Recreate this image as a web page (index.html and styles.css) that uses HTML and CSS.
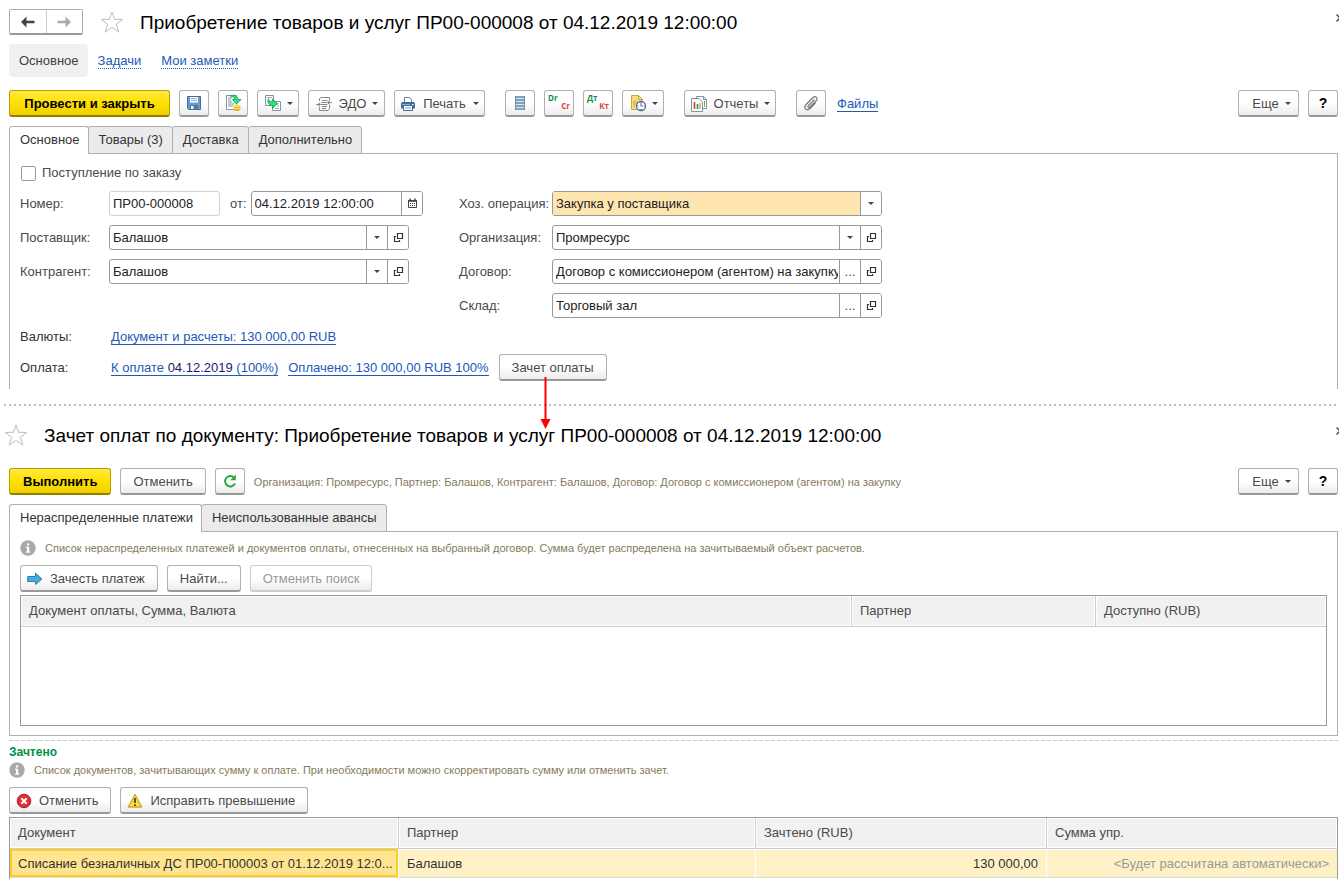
FILE: index.html
```html
<!DOCTYPE html>
<html lang="ru">
<head>
<meta charset="utf-8">
<title>Приобретение товаров и услуг</title>
<link rel="stylesheet" href="styles.css">
</head>
<body>
<svg class="sprite" width="0" height="0" aria-hidden="true">
  <defs>
    <symbol id="star" viewBox="0 0 24 22"><path d="M12 1 14.600 8.300 22.800 8.400 16.300 13.300 18.800 21.200 12 16.500 5.200 21.200 7.700 13.300 1.200 8.400 9.400 8.300Z" fill="#fff" stroke="#b9bec4" stroke-width="1"/></symbol>
    <symbol id="open" viewBox="0 0 11 11"><path d="M4.500 1.500H9.500V6.500H4.500ZM3 4.500H1.500V9.500H6.500V8" fill="none" stroke="#333" stroke-width="1.200"/></symbol>
    <symbol id="close" viewBox="0 0 8 8"><path d="M0.500 0.500 7.500 7.500M7.500 0.500 0.500 7.500" stroke="#444" stroke-width="1.300"/></symbol>
    <symbol id="info" viewBox="0 0 16 16"><circle cx="8" cy="8" r="7.700" fill="#a9a9a9"/><path d="M7 3.500H9.200V5.500H7ZM6 6.700H9.200V11.500H10.200V12.700H6V11.500H7V7.900H6Z" fill="#fff"/></symbol>
  </defs>
</svg>

<main class="page">
  <section class="document">
    <header class="head">
      <div class="history">
        <button class="history-btn" type="button" aria-label="Назад"><svg width="16" height="12" viewBox="0 0 16 12"><path d="M1 6 6.500 0.500V4.800H14.500V7.200H6.500V11.500Z" fill="#444"/></svg></button>
        <button class="history-btn" type="button" aria-label="Вперед"><svg width="16" height="12" viewBox="0 0 16 12"><path d="M15 6 9.500 0.500V4.800H1.500V7.200H9.500V11.500Z" fill="#aaa"/></svg></button>
      </div>
      <button class="plain star-btn" type="button" aria-label="В избранное"><svg width="24" height="22"><use href="#star"/></svg></button>
      <h1 class="title">Приобретение товаров и услуг ПР00-000008 от 04.12.2019 12:00:00</h1>
      <button class="plain close-btn" type="button" aria-label="Закрыть"><svg width="8" height="8"><use href="#close"/></svg></button>
    </header>

    <nav class="sections">
      <a class="section current" href="#">Основное</a>
      <a class="section" href="#"><span>Задачи</span></a>
      <a class="section" href="#"><span>Мои заметки</span></a>
    </nav>

    <div class="toolbar">
      <div class="group">
        <button class="btn primary post" type="button">Провести и закрыть</button>
        <button class="btn icon" type="button" aria-label="Записать"><svg width="16" height="16" viewBox="0 0 16 16"><path d="M1.500 1.500H14.500V14.500H2.700L1.500 13.300Z" fill="#6d9bd1" stroke="#3f6ba3"/><path d="M4 2H12V7.500H4Z" fill="#fff"/><path d="M5 3.500H11M5 5.500H11" stroke="#8fb0dc"/><path d="M4 10H12V14.500H4Z" fill="#54779f"/><path d="M5 11H7.500V14H5Z" fill="#fff"/></svg></button>
        <button class="btn icon" type="button" aria-label="Провести"><svg width="18" height="18" viewBox="0 0 18 18"><path d="M2.500 1.500H12.500V15.500H2.500Z" fill="#fff" stroke="#8395a5"/><path d="M4 4H8M4 6H7M4 8H8M4 10H10M4 12H9" stroke="#8395a5"/><path d="M6 2C10 0 14 2 14 5.500H17L12.500 10 8.500 5.500H11C11 3.500 9 2.500 6 2Z" fill="#2fe07c" stroke="#14a052" stroke-width=".8"/><ellipse cx="13" cy="15.200" rx="3.500" ry="1.800" fill="#e6b22f"/><ellipse cx="13" cy="12.800" rx="3.500" ry="1.800" fill="#d79a1b"/><ellipse cx="13" cy="12" rx="3.500" ry="1.500" fill="#ffdc62"/><path d="M9.500 14.600H16.500" stroke="#ffe27b"/></svg></button>
        <button class="btn menu-icon" type="button" aria-label="Создать на основании"><svg width="18" height="18" viewBox="0 0 18 18"><path d="M1.500 1.500H9.500V11.500H1.500ZM8.500 7.500H16.500V16.500H8.500Z" fill="#fff" stroke="#8395a5"/><path d="M3 3.500H8M13 10H15M13 12H15M11 14.500H15" stroke="#9aabb8"/><path d="M4.500 4.500C4.500 7 6 7.500 8.500 7.500V5L13.500 9.500 8.500 14.500V11.500C4.500 11.500 3 8.500 4.500 4.500Z" fill="#2fe07c" stroke="#14a052" stroke-width=".8"/></svg><i class="caret"></i></button>
        <button class="btn edo" type="button"><svg width="18" height="18" viewBox="0 0 18 18"><path d="M4.500 6V3.500L6 2.500H14.500V5M14.500 10V13.500L13 15.500H4.500V12M7 5.500H12.500M6 7.500H12.500M6 9.500H12.500M7 11.500H12M7 13.500H11" fill="none" stroke="#888"/><path d="M1 9.500H5M12.500 7.500H17" stroke="#888" stroke-width="1.200"/><path d="M3.500 7 6 9.500 3.500 12ZM14.500 5 12 7.500 14.500 10Z" fill="#888"/></svg><span>ЭДО</span><i class="caret"></i></button>
        <button class="btn print" type="button"><svg width="16" height="16" viewBox="0 0 16 16"><path d="M4.500 6V1.500H9.500L11.500 3.500V6" fill="#fff" stroke="#66829c"/><path d="M2 6H14L15 7.500V12.500H1V7.500Z" fill="#3e6c99"/><path d="M2 8.500H10" stroke="#88afd2"/><path d="M3.500 9.500H12.500V14.500H3.500Z" fill="#fff" stroke="#3e6c99"/><path d="M5 12H11" stroke="#7792aa"/><path d="M12 8.500H13.500" stroke="#fff"/></svg><span>Печать</span><i class="caret"></i></button>
      </div>
      <div class="group">
        <button class="btn icon" type="button" aria-label="Структура"><svg width="12" height="16" viewBox="0 0 12 16"><path d="M1 1H11V15H1Z" fill="#d4e4f0"/><path d="M1.500 1V15M10.500 1V15" stroke="#7297b5"/><path d="M1 2H11M1 5H11M1 8H11M1 11H11M1 14H11" stroke="#638cae" stroke-width="1.400"/></svg></button>
        <button class="btn icon entries" type="button"><span class="debit">Dr</span><span class="credit">Cr</span></button>
        <button class="btn icon entries" type="button"><span class="debit">Дт</span><span class="credit">Кт</span></button>
        <button class="btn menu-icon" type="button" aria-label="История"><svg width="18" height="18" viewBox="0 0 18 18"><path d="M2.500 1.500H9.500L13.500 5.500V15.500H2.500Z" fill="#f6dc81" stroke="#c9a646"/><path d="M9.500 1.500V5.500H13.500M4 8H8M4 10H7M4 12H6" fill="none" stroke="#c9a646"/><circle cx="12" cy="12" r="4.500" fill="#fff" stroke="#3d73ad" stroke-width="1.300"/><path d="M12 12V9M12 12H14" stroke="#3d73ad"/><path d="M11.400 8.200H12.600M11.400 15.500H12.600M8.500 12H9.500M14.700 12H15.700" stroke="#e22d2d" stroke-width="1.200"/></svg><i class="caret"></i></button>
      </div>
      <div class="group">
        <button class="btn reports" type="button"><svg width="18" height="18" viewBox="0 0 18 18"><path d="M6.500 1.500H13.500L16.500 4.500V13.500H6.500Z" fill="#fff" stroke="#7d92a3"/><path d="M1.500 3.500H9L12.500 7V16.500H1.500Z" fill="#fff" stroke="#7d92a3"/><path d="M13.500 1.500V4.500H16.500" fill="none" stroke="#7d92a3"/><path d="M4.500 7V14" stroke="#e33131" stroke-width="1.600"/><path d="M7.500 9V14" stroke="#159a53" stroke-width="1.600"/><path d="M10 8V14" stroke="#d5a72d" stroke-width="1.400"/><path d="M14.500 6V12" stroke="#70aa37"/></svg><span>Отчеты</span><i class="caret"></i></button>
      </div>
      <div class="group files">
        <button class="btn icon" type="button" aria-label="Присоединенные файлы"><svg width="16" height="16" viewBox="0 0 16 16"><path d="M11.500 4.500 5.500 10.500C4 12 5.800 13.300 7 12L13 6C15.800 3.200 12.500.2 9.800 2.800L3.500 9C-.5 13 3.800 16.500 7 13.500L12.500 8" fill="none" stroke="#777" stroke-width="1.200"/></svg></button>
        <a class="link" href="#">Файлы</a>
      </div>
      <div class="group right">
        <button class="btn more" type="button"><span>Еще</span><i class="caret"></i></button>
        <button class="btn icon help" type="button">?</button>
      </div>
    </div>

    <div class="tabs" role="tablist">
      <button class="tab active" type="button" role="tab" aria-selected="true">Основное</button>
      <button class="tab" type="button" role="tab">Товары (3)</button>
      <button class="tab" type="button" role="tab">Доставка</button>
      <button class="tab" type="button" role="tab">Дополнительно</button>
    </div>

    <form class="panel form-panel">
      <label class="check"><input type="checkbox">Поступление по заказу</label>
      <div class="columns">
        <div class="fields fields-left">
          <label for="num">Номер:</label>
          <div class="number-row">
            <div class="field number"><input id="num" value="ПР00-000008" readonly></div>
            <label for="date">от:</label>
            <div class="field date"><input id="date" value="04.12.2019 12:00:00"><button type="button" aria-label="Календарь"><svg width="11" height="11" viewBox="0 0 11 11"><path d="M1.500 2.500H9.500V9.500H1.500Z" fill="#fff" stroke="#444"/><path d="M1 3H10M3 .5V3M8 .5V3" stroke="#444" stroke-width="1.500"/><path d="M3 5.500H8M3 7.500H8" stroke="#444" stroke-dasharray="1 1"/></svg></button></div>
          </div>
          <label for="supplier">Поставщик:</label>
          <div class="field"><input id="supplier" value="Балашов"><button type="button" aria-label="Выбрать"><i class="caret"></i></button><button type="button" aria-label="Открыть"><svg width="11" height="11"><use href="#open"/></svg></button></div>
          <label for="party">Контрагент:</label>
          <div class="field"><input id="party" value="Балашов"><button type="button" aria-label="Выбрать"><i class="caret"></i></button><button type="button" aria-label="Открыть"><svg width="11" height="11"><use href="#open"/></svg></button></div>
        </div>
        <div class="fields fields-right">
          <label for="operation">Хоз. операция:</label>
          <div class="field accent"><select id="operation"><option>Закупка у поставщика</option></select><span class="drop"><i class="caret"></i></span></div>
          <label for="org">Организация:</label>
          <div class="field"><input id="org" value="Промресурс"><button type="button" aria-label="Выбрать"><i class="caret"></i></button><button type="button" aria-label="Открыть"><svg width="11" height="11"><use href="#open"/></svg></button></div>
          <label for="contract">Договор:</label>
          <div class="field"><input id="contract" value="Договор с комиссионером (агентом) на закупку"><button type="button">...</button><button type="button" aria-label="Открыть"><svg width="11" height="11"><use href="#open"/></svg></button></div>
          <label for="store">Склад:</label>
          <div class="field"><input id="store" value="Торговый зал"><button type="button">...</button><button type="button" aria-label="Открыть"><svg width="11" height="11"><use href="#open"/></svg></button></div>
        </div>
      </div>
      <div class="summary">
        <span class="caption">Валюты:</span>
        <a class="link" href="#">Документ и расчеты: 130 000,00 RUB</a>
      </div>
      <div class="summary payment">
        <span class="caption">Оплата:</span>
        <a class="link" href="#">К оплате <b>04.12.2019</b> (100%)</a>
        <a class="link" href="#">Оплачено: 130 000,00 RUB 100%</a>
        <span class="offset">
          <button class="btn" type="button">Зачет оплаты</button>
          <svg class="arrow" width="11" height="52" viewBox="0 0 11 52" aria-hidden="true"><path d="M5.500 0V44" stroke="#f00" stroke-width="2"/><path d="M.5 42H10.500L5.500 52Z" fill="#f00"/></svg>
        </span>
      </div>
    </form>
  </section>

  <div class="divider"></div>

  <section class="offsets">
    <header class="head head-second">
      <button class="plain star-btn" type="button" aria-label="В избранное"><svg width="24" height="22"><use href="#star"/></svg></button>
      <h2 class="title">Зачет оплат по документу: Приобретение товаров и услуг ПР00-000008 от 04.12.2019 12:00:00</h2>
      <button class="plain close-btn" type="button" aria-label="Закрыть"><svg width="8" height="8"><use href="#close"/></svg></button>
    </header>

    <div class="toolbar">
      <div class="group">
        <button class="btn primary" type="button">Выполнить</button>
        <button class="btn" type="button">Отменить</button>
        <button class="btn icon" type="button" aria-label="Обновить"><svg width="16" height="16" viewBox="0 0 16 16"><path d="M12 4.500A5.200 5.200 0 1 0 13 10.500" fill="none" stroke="#2ca83c" stroke-width="2"/><path d="M13.800 1.500V7.200H8.200Z" fill="#2ca83c"/></svg></button>
        <span class="hint">Организация: Промресурс, Партнер: Балашов, Контрагент: Балашов, Договор: Договор с комиссионером (агентом) на закупку</span>
      </div>
      <div class="group right">
        <button class="btn more" type="button"><span>Еще</span><i class="caret"></i></button>
        <button class="btn icon help" type="button">?</button>
      </div>
    </div>

    <div class="tabs" role="tablist">
      <button class="tab active" type="button" role="tab" aria-selected="true">Нераспределенные платежи</button>
      <button class="tab" type="button" role="tab">Неиспользованные авансы</button>
    </div>

    <div class="panel payments-panel">
      <p class="note"><svg width="16" height="16"><use href="#info"/></svg><span class="hint">Список нераспределенных платежей и документов оплаты, отнесенных на выбранный договор. Сумма будет распределена на зачитываемый объект расчетов.</span></p>
      <div class="group actions">
        <button class="btn with-icon" type="button"><svg width="16" height="14" viewBox="0 0 16 14"><path d="M.7 4.500H8.500V1.200L15 7 8.500 12.500V9.500H.7Z" fill="#41abe6" stroke="#3a7ba8"/></svg><span>Зачесть платеж</span></button>
        <button class="btn" type="button">Найти...</button>
        <button class="btn" type="button" disabled>Отменить поиск</button>
      </div>
      <div class="table-box payments-box">
        <table>
          <colgroup><col><col class="col-partner"><col class="col-available"></colgroup>
          <thead><tr><th>Документ оплаты, Сумма, Валюта</th><th>Партнер</th><th>Доступно (RUB)</th></tr></thead>
        </table>
      </div>
    </div>

    <div class="dashes"></div>
    <h3 class="subtitle">Зачтено</h3>
    <p class="note"><svg width="16" height="16"><use href="#info"/></svg><span class="hint">Список документов, зачитывающих сумму к оплате. При необходимости можно скорректировать сумму или отменить зачет.</span></p>
    <div class="group actions">
      <button class="btn with-icon" type="button"><svg width="16" height="16" viewBox="0 0 16 16"><circle cx="8" cy="8" r="6.800" fill="#df2d34" stroke="#ad1d24"/><path d="M5.300 5.300 10.700 10.700M10.700 5.300 5.300 10.700" stroke="#fff" stroke-width="2"/></svg><span>Отменить</span></button>
      <button class="btn with-icon" type="button"><svg width="16" height="16" viewBox="0 0 16 16"><path d="M8 1.500 14.700 14H1.300Z" fill="#fcdd3d" stroke="#d1ab24" stroke-linejoin="round" stroke-width="1.400"/><path d="M8 5V10M8 11.200V13" stroke="#444" stroke-width="1.800"/></svg><span>Исправить превышение</span></button>
    </div>
    <div class="table-box done-box">
      <table>
        <colgroup><col class="col-doc"><col class="col-party"><col class="col-sum"><col></colgroup>
        <thead><tr><th>Документ</th><th>Партнер</th><th>Зачтено (RUB)</th><th>Сумма упр.</th></tr></thead>
        <tbody><tr><td class="selected">Списание безналичных ДС ПР00-П00003 от 01.12.2019 12:0...</td><td>Балашов</td><td class="num">130 000,00</td><td class="num auto">&lt;Будет рассчитана автоматически&gt;</td></tr></tbody>
      </table>
    </div>
  </section>
</main>
</body>
</html>
```
FILE: styles.css
```css
* { box-sizing: border-box; }
html { height: 100%; overflow: hidden; }
body { margin: 0; height: 100%; overflow: hidden; background: #fff; color: #4a4a4a; font: 13px/16px "Liberation Sans", Arial, sans-serif; }
button, input, select { font: inherit; color: inherit; }
svg { display: block; flex: none; }
.sprite { position: absolute; }
.page { padding: 8px 1px 0 9px; }

/* Window heading */
.head { display: flex; align-items: center; height: 28px; margin-right: -1px; }
.history { display: flex; width: 74px; height: 26px; border: 1px solid #aaa; border-bottom: 2px solid #999; border-radius: 2px; }
.history-btn { flex: 1; display: flex; align-items: center; justify-content: center; padding: 0; border: 0; background: #fff; }
.history-btn + .history-btn { border-left: 1px solid #ccc; }
.plain { padding: 0; border: 0; background: none; }
.star-btn { margin: 0 16px 0 17px; }
.title { flex: 1; margin: 0; padding-top: 2px; color: #000; font-size: 19px; line-height: 24px; font-weight: normal; white-space: nowrap; }
.close-btn { display: flex; justify-content: flex-start; width: 3px; overflow: hidden; margin-bottom: 8px; }
.head-second .star-btn { margin: 0 16px 0 -5px; }

/* Section links */
.sections { display: flex; align-items: center; gap: 20px; margin-top: 8px; height: 33px; color: #2159b8; }
.section { padding-top: 1px; color: #2159b8; text-decoration: none; }
.section span { border-bottom: 1px dotted #2159b8; }
.current { margin-right: -10px; padding: 9px 9px 8px 10px; border-radius: 4px; background: #f0f0f0; color: #404040; }

/* Command bars */
.toolbar { display: flex; gap: 20px; margin-top: 13px; }
.group { display: flex; align-items: center; gap: 9px; }
.right { margin-left: auto; }
.btn { display: flex; align-items: center; justify-content: center; height: 27px; padding: 1px 12px 0; border: 1px solid #b0b0b0; border-bottom: 2px solid #999; border-radius: 3px; background: linear-gradient(#fff 50%, #ececec); white-space: nowrap; }
.btn:disabled { border-color: #ccc; color: #999; }
.primary { padding: 1px 13px 0; border-color: #b5a000; border-bottom-color: #8f7e00; background: linear-gradient(#ffea40, #ffe000 50%, #f0d000); color: #000; font-weight: bold; }
.post { width: 161px; }
.icon { width: 30px; padding: 0; }
.menu-icon { width: 42px; padding: 0; gap: 5px; }
.edo { width: 77px; padding: 1px 6px 0; gap: 6px; }
.print { width: 91px; padding: 1px 6px 0; gap: 7px; }
.reports { width: 92px; padding: 1px 6px 0; gap: 6px; }
.more { width: 61px; padding: 1px 6px 0 12px; gap: 6px; }
.help { color: #000; font-size: 14px; font-weight: bold; }
.with-icon { padding-left: 6px; gap: 7px; }
.caret { width: 0; height: 0; border: 3px solid transparent; border-top-color: #444; border-bottom: 0; }
.entries { flex-direction: column; padding: 0 3px 2px; font: bold 8px/8px "Open Sans", sans-serif; }
.debit { align-self: flex-start; color: #0a9150; }
.credit { align-self: flex-end; color: #e34545; }
.link { color: #2159b8; text-decoration: none; border-bottom: 1px solid #2159b8; line-height: 15px; white-space: nowrap; }
.link b { color: #1a1a70; font-weight: normal; }
.files { gap: 11px; }

/* Tabs */
.tabs { display: flex; margin-top: 9px; position: relative; }
.tab { height: 28px; padding: 0 9px 0 10px; margin-left: -1px; border: 1px solid #b0b0b0; border-radius: 3px 3px 0 0; background: #ebebeb; color: #333; }
.tab.active { margin-left: 0; padding-right: 8px; border-bottom-color: #fff; background: #fff; }
.panel { margin-top: -1px; border: 1px solid #b0b0b0; padding: 0 10px; }

/* Document form */
.form-panel { border-bottom: 0; padding-bottom: 8px; }
.check { display: flex; align-items: center; gap: 6px; padding-top: 11px; }
.check input { appearance: none; width: 15px; height: 15px; margin: 0 0 0 1px; border: 1px solid #999; border-radius: 2px; background: #fff; }
.columns { display: flex; gap: 50px; margin-top: 10px; }
.fields { display: grid; align-items: center; align-content: start; gap: 9px 0; }
.fields-left { grid-template-columns: 89px 300px; }
.fields-right { grid-template-columns: 93px 330px; }
.number-row { display: flex; align-items: center; gap: 10px; margin-right: -14px; }
.number-row label { margin-right: -6px; }
.field { display: flex; min-width: 0; height: 25px; border: 1px solid #999; border-radius: 3px; background: #fff; overflow: hidden; }
.field input, .field select { flex: 1; min-width: 0; width: 0; padding: 0 3px; border: 0; outline: 0; background: none; color: #222; appearance: none; }
.field button, .drop { display: flex; align-items: center; justify-content: center; width: 21px; padding: 0; border: 0; border-left: 1px solid #999; background: #fff; }
.field input:not(:only-child) { padding-right: 1px; }
.number { width: 111px; border-color: #d0d0d0; }
.date { flex: 1; }
.accent select { background: #ffe5b0; }
.summary { display: flex; align-items: center; gap: 10px; margin-top: 10px; height: 17px; }
.summary .caption { width: 81px; color: #333; }
.payment { margin-top: 9px; height: 27px; }
.offset { position: relative; }
.arrow { position: absolute; left: 41px; top: 23px; }

.divider { height: 2px; margin: 15px 0 0 -5px; background: repeating-linear-gradient(90deg, #bbb 0 2px, transparent 2px 5px); }

/* Payment offsets */
.head-second { margin-top: 15px; }
.offsets .toolbar { margin-top: 19px; }
.hint { color: #857b58; font-size: 11px; line-height: 14px; white-space: nowrap; }
.note { display: flex; align-items: center; gap: 9px; margin: 0; }
.payments-panel { padding-top: 8px; padding-bottom: 9px; }
.actions { margin-top: 9px; }
.table-box { border: 1px solid #999; margin-top: 3px; }
.payments-box { height: 131px; }
table { width: 100%; table-layout: fixed; border-collapse: separate; border-spacing: 0; }
th, td { height: 31px; padding: 0 8px; text-align: left; font-weight: normal; overflow: hidden; text-overflow: ellipsis; white-space: nowrap; }
th { border-right: 1px solid #ccc; border-bottom: 1px solid #ccc; background: #f1f1f1; box-shadow: inset 0 0 0 1px #fff; }
th:last-child { border-right: 0; }
td { height: 29px; padding: 1px 8px 0; background: #fff1c6; border-right: 1px solid #fff; color: #333; box-shadow: inset 0 1px #fff; }
td:last-child { border-right: 0; }
.col-partner { width: 244px; }
.col-available { width: 230px; }
.col-doc { width: 389px; }
.col-party { width: 357px; }
.col-sum { width: 291px; }
.selected { padding-right: 0; background: #ffe590; box-shadow: inset 0 0 0 2px #fc2; }
.num { text-align: right; }
.auto { color: #999; }
.done-box { border-bottom: 0; padding-bottom: 12px; }
.done-box tbody td { border-bottom: 1px solid #ddd; }
.dashes { height: 1px; margin-top: 4px; background: repeating-linear-gradient(90deg, #ccc 0 4px, transparent 4px 6px); }
.subtitle { margin: 4px 0 2px; color: #00924a; font-size: 12px; line-height: 15px; }
```
